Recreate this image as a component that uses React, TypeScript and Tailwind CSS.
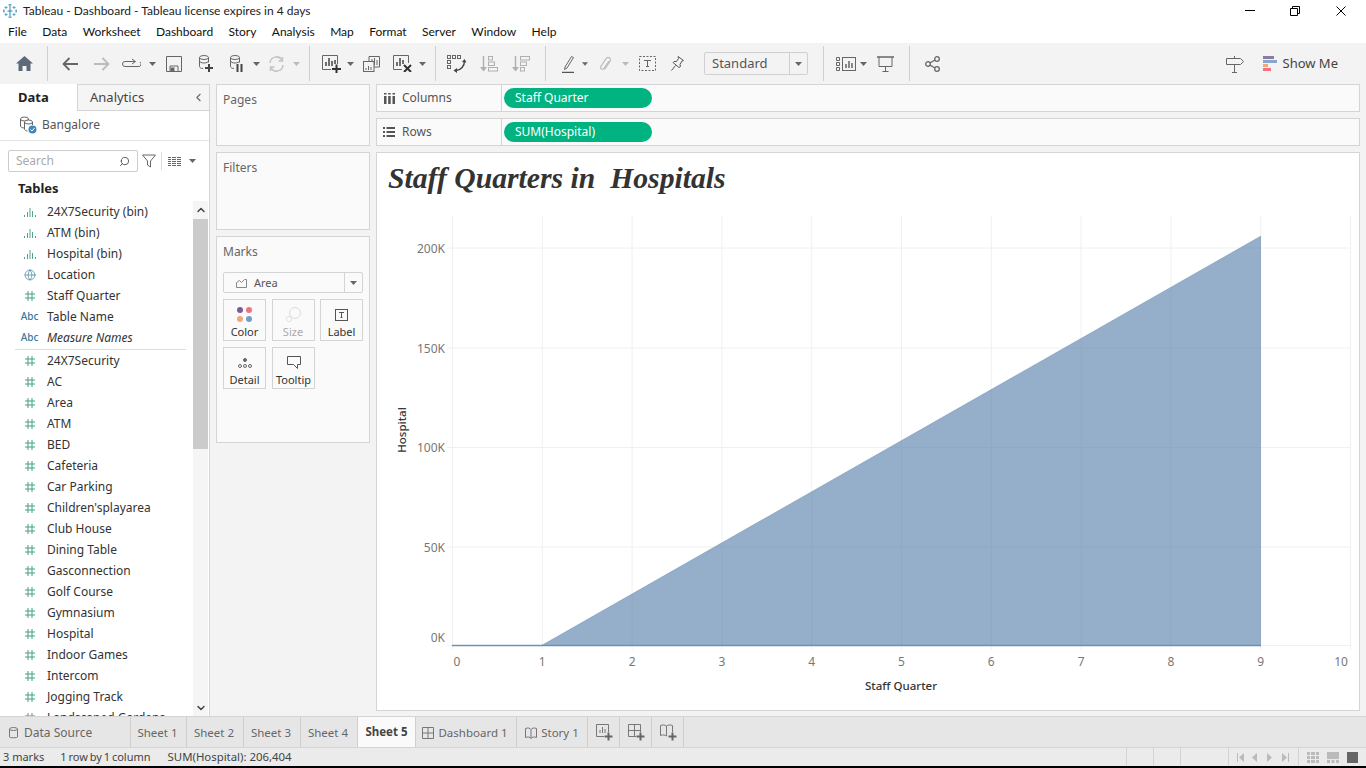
import { ChevronLeft, ChevronUp, ChevronDown, Globe, Search } from 'lucide-react';

const font = { fontFamily: '"Noto Sans", "Open Sans", sans-serif' };
const systemFont = { fontFamily: 'Lato, "Noto Sans", sans-serif' };

const menuItems = ['File', 'Data', 'Worksheet', 'Dashboard', 'Story', 'Analysis', 'Map', 'Format', 'Server', 'Window', 'Help'];

const binFields = ['24X7Security (bin)', 'ATM (bin)', 'Hospital (bin)'];
const measures = [
  '24X7Security', 'AC', 'Area', 'ATM', 'BED', 'Cafeteria', 'Car Parking', "Children'splayarea", 'Club House',
  'Dining Table', 'Gasconnection', 'Golf Course', 'Gymnasium', 'Hospital', 'Indoor Games', 'Intercom',
  'Jogging Track', 'Landscaped Gardens',
];

const Caret = ({ color = '#666' }: { color?: string }) => (
  <svg width="7" height="4" viewBox="0 0 7 4"><path d="M0 0h7L3.5 4z" fill={color} /></svg>
);

const Sep = () => <span className="h-[35px] w-px bg-[#d0d0d0] shrink-0" />;

const BinIcon = () => (
  <svg width="14" height="10" viewBox="0 0 14 10" fill="#4fa587">
    <rect x="1" y="8" width="1" height="2" /><rect x="4" y="5" width="1" height="5" /><rect x="6.5" y="1" width="1" height="9" />
    <rect x="9" y="4" width="1" height="6" /><rect x="12" y="8" width="1" height="2" />
  </svg>
);

const HashIcon = () => (
  <svg width="10" height="10" viewBox="0 0 10 10" stroke="#3fa382" fill="none">
    <path d="M3 0v10M7 0v10M0 3h10M0 7h10" />
  </svg>
);

const FieldIcon = ({ type }: { type: string }) => {
  if (type === 'bin') return <BinIcon />;
  if (type === 'geo') return <Globe size={12} color="#4a8ca8" strokeWidth={1.5} />;
  if (type === 'abc') return <span className="text-[10px] font-medium text-[#3d7a9c]">Abc</span>;
  return <HashIcon />;
};

const FieldRow = ({ type, name, italic }: { type: string; name: string; italic?: boolean }) => (
  <div className="h-[21px] flex items-center shrink-0">
    <span className="w-[47px] pl-[15px] pr-[3px] flex justify-center shrink-0"><FieldIcon type={type} /></span>
    <span className={`text-xs text-[#333] whitespace-nowrap ${italic ? 'italic' : ''}`}>{name}</span>
  </div>
);

const DataPane = () => (
  <div className="w-[210px] shrink-0 bg-white border-r border-[#d4d4d4] flex flex-col overflow-hidden">
    <div className="h-[27px] flex shrink-0">
      <div className="w-[77px] pl-[18px] flex items-center text-[13px] font-bold text-[#222]">Data</div>
      <div className="flex-1 bg-[#f5f5f5] border-l border-b border-t border-[#d4d4d4] pl-[12px] pr-[4px] flex items-center justify-between text-[13px] text-[#444]">
        Analytics
        <ChevronLeft size={13} color="#666" />
      </div>
    </div>
    <div className="h-[30px] border-b border-[#e4e4e4] flex items-center shrink-0 pl-[19px] gap-[5px] pb-[2px]">
      <svg width="18" height="18" viewBox="0 0 18 18" fill="none" stroke="#666" strokeWidth="1">
        <ellipse cx="5.5" cy="3" rx="4" ry="2" />
        <path d="M1.500 3v7c0 1 1.500 2 4 2M9.500 3v1" />
        <ellipse cx="9.500" cy="6" rx="4" ry="2" fill="#fff" />
        <path d="M5.500 6v7c0 1 1.500 2 3 2M13.500 6v3" />
        <circle cx="13.500" cy="13.500" r="4" fill="#3f88b5" stroke="none" />
        <path d="M11.500 13.500l1.500 1.500 2.500-3" stroke="#fff" />
      </svg>
      <span className="text-xs text-[#555]">Bangalore</span>
    </div>
    <div className="h-[38px] flex items-center shrink-0 pl-[8px] pt-[2px]">
      <div className="w-[130px] h-[22px] border border-[#ccc] rounded-[2px] flex items-center justify-between pl-[7px] pr-[7px]">
        <span className="text-xs text-[#aaa]">Search</span>
        <Search size={11} color="#555" className="-scale-x-100" />
      </div>
      <svg className="ml-[4px]" width="14" height="14" viewBox="0 0 14 14" fill="none" stroke="#666">
        <path d="M.5 1h13L8.5 7v6l-3-2V7z" />
      </svg>
      <span className="ml-[5px] w-px h-[18px] bg-[#ddd]" />
      <svg className="ml-[6px]" width="13" height="9" viewBox="0 0 13 9" fill="#666">
        <path d="M0 0h13v1H0zM0 2h13v1H0zM0 4h13v1H0zM0 6h13v1H0zM0 8h13v1H0z" />
        <path d="M3 0h1v9H3zM8 0h1v9H8z" fill="#fff" />
      </svg>
      <span className="ml-[8px] flex"><Caret /></span>
    </div>
    <div className="pl-[18px] h-[20px] text-[13px] font-bold text-[#222] flex items-center shrink-0">Tables</div>
    <div className="flex flex-1 min-h-0 mt-[2px]">
      <div className="flex-1 min-w-0 flex flex-col overflow-hidden">
        {binFields.map((f) => <FieldRow key={f} type="bin" name={f} />)}
        <FieldRow type="geo" name="Location" />
        <FieldRow type="hash" name="Staff Quarter" />
        <FieldRow type="abc" name="Table Name" />
        <FieldRow type="abc" name="Measure Names" italic />
        <div className="h-px bg-[#ddd] ml-[15px] mr-[7px] mt-[1px] shrink-0" />
        {measures.map((f) => <FieldRow key={f} type="hash" name={f} />)}
      </div>
      <div className="w-[15px] mr-px shrink-0 bg-[#f5f5f5] flex flex-col">
        <div className="h-[18px] flex items-center justify-center"><ChevronUp size={12} color="#444" strokeWidth={3} /></div>
        <div className="h-[230px] bg-[#cbcbcb]" />
        <div className="flex-1" />
        <div className="h-[16px] flex items-center justify-center"><ChevronDown size={12} color="#444" strokeWidth={3} /></div>
      </div>
    </div>
  </div>
);

const MarkButton = ({ label, children, disabled }: { label: string; children: React.ReactNode; disabled?: boolean }) => (
  <div className="w-[43px] h-[42px] border border-[#d4d4d4] flex flex-col items-center pt-[5px]">
    <div className="h-[19px] flex items-center justify-center">{children}</div>
    <span className={`text-[11px] leading-[15px] ${disabled ? 'text-[#aaa]' : 'text-[#333]'}`}>{label}</span>
  </div>
);

const SideCard = ({ title, className, children }: { title: string; className: string; children?: React.ReactNode }) => (
  <div className={`bg-[#fafafa] border border-[#d4d4d4] px-[6px] ${className}`}>
    <div className="text-xs text-[#666] h-[16px] mt-[7px] flex items-center">{title}</div>
    {children}
  </div>
);

const MarksCard = () => (
  <SideCard title="Marks" className="h-[207px] shrink-0">
    <div className="mt-[12px] h-[21px] border border-[#d4d4d4] rounded-[2px] flex items-center">
      <div className="flex-1 flex items-center pl-[12px] gap-[7px] pt-[1px]">
        <svg width="11" height="10" viewBox="0 0 11 10" fill="none" stroke="#888"><path d="M.5 9.5v-5l3-2 2 2 3-3h2v8z" /></svg>
        <span className="text-[11px] text-[#555]">Area</span>
      </div>
      <div className="w-[18px] h-full border-l border-[#d4d4d4] flex items-center justify-center"><Caret /></div>
    </div>
    <div className="mt-[6px] flex justify-between">
      <MarkButton label="Color">
        <svg width="15" height="15" viewBox="0 0 15 15">
          <circle cx="3" cy="3" r="3" fill="#7b5c93" /><circle cx="12" cy="3" r="3" fill="#f2727e" />
          <circle cx="3" cy="12" r="3" fill="#f3a676" /><circle cx="12" cy="12" r="3" fill="#6f9ecb" />
        </svg>
      </MarkButton>
      <MarkButton label="Size" disabled>
        <svg width="15" height="15" viewBox="0 0 15 15" fill="none" stroke="#ddd">
          <circle cx="9" cy="6" r="5.5" /><circle cx="3" cy="12" r="2.5" fill="#fff" />
        </svg>
      </MarkButton>
      <MarkButton label="Label">
        <svg width="13" height="12" viewBox="0 0 13 12" fill="none" stroke="#555">
          <rect x=".5" y=".5" width="12" height="11" /><path d="M4 3.5h5M6.5 3.5v5M5.5 8.5h2" />
        </svg>
      </MarkButton>
    </div>
    <div className="mt-[6px] flex gap-[6px]">
      <MarkButton label="Detail">
        <svg width="14" height="10" viewBox="0 0 14 10" fill="none" stroke="#666">
          <circle cx="7" cy="2" r="1.5" fill="#666" /><circle cx="2" cy="8" r="1.5" /><circle cx="7" cy="8" r="1.5" /><circle cx="12" cy="8" r="1.5" />
        </svg>
      </MarkButton>
      <MarkButton label="Tooltip">
        <svg width="14" height="13" viewBox="0 0 14 13" fill="none" stroke="#555">
          <path d="M.5.5h13v8h-3v4l-4-4h-6z" />
        </svg>
      </MarkButton>
    </div>
  </SideCard>
);

const Shelf = ({ icon, label, pill }: { icon: React.ReactNode; label: string; pill: string }) => (
  <div className="h-[28px] bg-[#fafafa] border border-[#d4d4d4] flex items-center shrink-0">
    <div className="w-[125px] h-full border-r border-[#d4d4d4] flex items-center pl-[6px] gap-[7px] shrink-0">
      <span className="w-[12px] flex justify-center">{icon}</span>
      <span className="text-xs text-[#555]">{label}</span>
    </div>
    <div className="ml-[2px] w-[148px] h-[20px] rounded-full bg-[#00b381] pl-[11px] flex items-center text-xs text-white">{pill}</div>
  </div>
);

const chartFont = '"Noto Sans", "Open Sans", sans-serif';
const xTicks = [0, 1, 2, 3, 4, 5, 6, 7, 8, 9, 10];
const yGrid = [248, 348, 447.5, 547];
const yLabels = [
  { y: 248, label: '200K' },
  { y: 348, label: '150K' },
  { y: 447.5, label: '100K' },
  { y: 547, label: '50K' },
  { y: 637, label: '0K' },
];

const Chart = () => (
  <svg className="block" width="982" height="503" viewBox="377 207 982 503">
    {xTicks.map((t) => {
      const x = 452.5 + t * 89.8;
      return <line key={t} x1={x} x2={x} y1="216" y2="650" stroke="#f0f0f0" />;
    })}
    {yGrid.map((y) => <line key={y} x1="447" x2="1351" y1={y} y2={y} stroke="#f0f0f0" />)}
    <line x1="447" x2="1351" y1="645.5" y2="645.5" stroke="#f0f0f0" />
    <path d="M541.5 645.5L1261 236V646H541.5z" fill="#4e79a7" fillOpacity="0.6" />
    <path d="M541.5 645.5L1261 236" fill="none" stroke="#4e79a7" strokeOpacity="0.35" />
    <line x1="452" x2="1261" y1="645.5" y2="645.5" stroke="#6f8fb3" strokeWidth="1.5" />
    {yLabels.map((t) => (
      <text key={t.label} x="445" y={t.y + 4.5} textAnchor="end" fontSize="12" fill="#777" fontFamily={chartFont}>{t.label}</text>
    ))}
    {xTicks.map((t) => (
      <text key={t} x={t === 0 ? 457 : t === 10 ? 1341 : 452.5 + t * 89.8} y="666" textAnchor="middle" fontSize="12" fill="#777" fontFamily={chartFont}>{t}</text>
    ))}
    <text x="901" y="690" textAnchor="middle" fontSize="11.5" fontWeight="500" fill="#333" fontFamily={chartFont}>Staff Quarter</text>
    <text x="0" y="0" transform="translate(406 430) rotate(-90)" textAnchor="middle" fontSize="11.5" fontWeight="500" fill="#333" fontFamily={chartFont}>Hospital</text>
  </svg>
);

const Toolbar = () => (
  <div className="h-[41px] bg-[#f3f3f3] flex items-center shrink-0">
    <span className="w-[47px] flex justify-center pl-px">
      <svg width="17" height="15" viewBox="0 0 17 15" fill="#5c6a78"><path d="M8.5 0L17 7.5h-2.5V15h-4v-5h-4v5h-4V7.5H0z" /></svg>
    </span>
    <Sep />
    <span className="ml-[6px] w-[32px] flex justify-center">
      <svg width="16" height="14" viewBox="0 0 16 14" fill="none" stroke="#666" strokeWidth="1.8"><path d="M16 7H2M7.5 1L1.5 7l6 6" /></svg>
    </span>
    <span className="w-[32px] flex justify-center">
      <svg width="16" height="14" viewBox="0 0 16 14" fill="none" stroke="#bbb" strokeWidth="1.8"><path d="M0 7h14M8.5 1l6 6-6 6" /></svg>
    </span>
    <span className="w-[26px] flex justify-center">
      <svg width="19" height="12" viewBox="0 0 19 12" fill="none" stroke="#666"><path d="M13 3.5H3a2.5 2.5 0 000 5h13a2.5 2.5 0 002-4.5" /><path d="M10 1l3.5 2.5L10 6" /></svg>
    </span>
    <span className="w-[16px] flex justify-center"><Caret /></span>
    <span className="w-[28px] flex justify-center">
      <svg width="16" height="16" viewBox="0 0 16 16" fill="none" stroke="#666"><path d="M.5.5h15v15H.5z" /><path d="M4 15v-5h8v5" /><rect x="5" y="12" width="3" height="3" fill="#666" /></svg>
    </span>
    <span className="w-[34px] flex justify-center">
      <svg width="15" height="17" viewBox="0 0 15 17" fill="none" stroke="#666"><ellipse cx="6" cy="2.5" rx="4.5" ry="2" /><path d="M1.500 2.500v9c0 1 1.500 2 3.500 2M10.500 2.500v5M1.500 6c0 1 2 2 4.500 2s4.500-1 4.500-2" /><path d="M7 13h8M11 9v8" stroke="#444" strokeWidth="2" /></svg>
    </span>
    <span className="w-[28px] flex justify-center">
      <svg width="14" height="17" viewBox="0 0 14 17" fill="none" stroke="#666"><ellipse cx="6" cy="2.5" rx="4.5" ry="2" /><path d="M1.500 2.500v9c0 1 1.500 2 3.500 2M10.500 2.500v5M1.500 6c0 1 2 2 4.500 2s4.500-1 4.500-2" /><path d="M8.500 9v8M12.500 9v8" stroke="#444" strokeWidth="2" /></svg>
    </span>
    <span className="w-[12px] flex justify-center"><Caret /></span>
    <span className="w-[28px] flex justify-center">
      <svg width="17" height="16" viewBox="0 0 17 16" fill="none" stroke="#c4c4c4" strokeWidth="1.5"><path d="M2 7a6.500 6.500 0 0112-3M15 9a6.500 6.500 0 01-12 3" /><path d="M14.500 1v4h-4M2.500 15v-4h4" /></svg>
    </span>
    <span className="w-[12px] flex justify-center"><Caret color="#bbb" /></span>
    <span className="ml-[7px] flex"><Sep /></span>
    <span className="ml-[7px] w-[28px] flex justify-center">
      <svg width="19" height="18" viewBox="0 0 19 18" fill="none" stroke="#666"><path d="M15.500 9V.5H.5v14H9" /><path d="M4 11V7M7 11V3M10 11V6M13 9V5" stroke="#444" strokeWidth="1.500" /><path d="M10 14h9M14.500 9.500v8.500" stroke="#333" strokeWidth="2" /></svg>
    </span>
    <span className="w-[10px] flex justify-center"><Caret /></span>
    <span className="w-[32px] flex justify-center">
      <svg width="17" height="16" viewBox="0 0 17 16" fill="none" stroke="#666"><path d="M6 5V.5h10.500V11H11" /><rect x=".5" y="5.500" width="10.500" height="10" /><path d="M9 5V3M11.500 9V2M14 9V4M3 14v-2M5.500 14v-4M8 14v-3" strokeWidth="1" /></svg>
    </span>
    <span className="w-[30px] flex justify-center">
      <svg width="19" height="17" viewBox="0 0 19 17" fill="none" stroke="#666"><path d="M15.500 8V.5H.5v14H9" /><path d="M4 11V7M7 11V3M10 9V5" stroke="#444" strokeWidth="1.500" /><path d="M11 10l7 7M18 10l-7 7" stroke="#333" strokeWidth="2" /></svg>
    </span>
    <span className="w-[10px] flex justify-center"><Caret /></span>
    <span className="ml-[8px] flex"><Sep /></span>
    <span className="ml-[7px] w-[28px] flex justify-center">
      <svg width="20" height="18" viewBox="0 0 20 18" fill="none" stroke="#666">
        <rect x=".5" y=".5" width="3" height="3" /><rect x="5.500" y=".5" width="3" height="3" /><rect x="10.500" y=".5" width="3" height="3" />
        <rect x=".5" y="5.500" width="3" height="3" /><rect x=".5" y="10.500" width="3" height="3" />
        <path d="M17.500 6c0 5-3.500 9-8.500 9.500" strokeWidth="1.400" stroke="#444" />
        <path d="M15 7l2.500-3 2 3.500zM10 13v5l-3.500-2.500z" fill="#444" stroke="none" />
      </svg>
    </span>
    <span className="w-[36px] flex justify-center">
      <svg width="18" height="16" viewBox="0 0 18 16" fill="none" stroke="#b0b0b0"><path d="M3.500 0v12" strokeWidth="1.500" /><path d="M0 11h7l-3.500 4.500z" fill="#b0b0b0" stroke="none" /><rect x="8.500" y=".5" width="4" height="3.500" /><rect x="8.500" y="6" width="6" height="3.500" /><rect x="8.500" y="11.500" width="9" height="3.500" /></svg>
    </span>
    <span className="w-[28px] flex justify-center">
      <svg width="18" height="16" viewBox="0 0 18 16" fill="none" stroke="#b0b0b0"><path d="M3.500 0v12" strokeWidth="1.500" /><path d="M0 11h7l-3.500 4.500z" fill="#b0b0b0" stroke="none" /><rect x="8.500" y=".5" width="9" height="3.500" /><rect x="8.500" y="6" width="6" height="3.500" /><rect x="8.500" y="11.500" width="4" height="3.500" /></svg>
    </span>
    <span className="ml-[10px] flex"><Sep /></span>
    <span className="ml-[8px] w-[28px] flex justify-center">
      <svg width="13" height="18" viewBox="0 0 13 18" fill="none" stroke="#666"><path d="M3 12L9.500 1.500l2 1L5 13l-2.500 1.500z" /><path d="M0 17.500h12" strokeWidth="1.500" stroke="#555" /></svg>
    </span>
    <span className="w-[6px] flex justify-center"><Caret /></span>
    <span className="ml-[3px] w-[28px] flex justify-center">
      <svg width="12" height="16" viewBox="0 0 12 16" fill="none" stroke="#c0c0c0" strokeWidth="1.300"><path d="M10 5L4.500 13a2 2 0 01-3-2L7.500 2a2.500 2.500 0 014 2.500L5.500 13.500" /></svg>
    </span>
    <span className="w-[12px] flex justify-center"><Caret color="#bbb" /></span>
    <span className="w-[32px] flex justify-center">
      <svg width="17" height="15" viewBox="0 0 17 15" fill="none" stroke="#666"><rect x=".5" y=".5" width="16" height="14" strokeDasharray="2 1.500" /><path d="M5 4.500h7M8.500 4.500v6M7 10.500h3" /></svg>
    </span>
    <span className="w-[28px] flex justify-center">
      <svg width="13" height="15" viewBox="0 0 13 15" fill="none" stroke="#555"><path d="M7 .5l5.500 4-1.500.5-2 3.500.5 2L8 11.500 2 6.500l1-1h2.500L7.500 2.500z" /><path d="M4.500 9.500L.5 14.500" /></svg>
    </span>
    <div className="ml-[13px] w-[104px] h-[23px] border border-[#d0d0d0] rounded-[2px] flex items-center shrink-0">
      <span className="flex-1 pl-[7px] text-[13px] text-[#555]">Standard</span>
      <span className="w-[18px] h-full border-l border-[#d0d0d0] flex items-center justify-center"><Caret /></span>
    </div>
    <span className="ml-[15px] flex"><Sep /></span>
    <span className="ml-[12px] w-[20px] flex justify-center">
      <svg width="20" height="14" viewBox="0 0 20 14" fill="none" stroke="#666"><path d="M.5.5h3v3h-3zM.5 5.500h3v3h-3zM.5 10.500h3v3h-3z" /><rect x="6.500" y=".5" width="13" height="13" /><path d="M10 11V7M13 11V4M16 11V6" strokeWidth="1.500" /></svg>
    </span>
    <span className="ml-[3px] w-[8px] flex justify-center"><Caret /></span>
    <span className="w-[36px] flex justify-center">
      <svg width="17" height="16" viewBox="0 0 17 16" fill="none" stroke="#666"><path d="M0 1h17" strokeWidth="1.500" /><path d="M2 1v9.500h13V1M8.500 10.500V15M5.500 15.500h6" /></svg>
    </span>
    <span className="ml-[6px] flex"><Sep /></span>
    <span className="w-[44px] flex justify-center">
      <svg width="15" height="16" viewBox="0 0 15 16" fill="none" stroke="#666" strokeWidth="1.300"><circle cx="3" cy="8" r="2.300" /><circle cx="12" cy="3" r="2.300" /><circle cx="12" cy="13" r="2.300" /><path d="M5 7l5-3M5 9l5 3" /></svg>
    </span>
    <div className="ml-auto flex items-center pr-[28px]">
      <svg width="18" height="18" viewBox="0 0 18 18" fill="none" stroke="#666"><path d="M.5 3.500h14l3 3-3 3H.5zM8.500 1v2.500M8.500 9.500v8M6 17.500h5" /></svg>
      <svg className="ml-[19px]" width="14" height="16" viewBox="0 0 14 16">
        <rect width="11" height="3" fill="#8b7aa3" /><rect y="4" width="14" height="3" fill="#86a6cd" /><rect y="8" width="5" height="3" fill="#f3a676" /><rect y="12" width="8" height="3" fill="#f2727e" />
      </svg>
      <span className="ml-[6px] text-[13px] text-[#444]">Show Me</span>
    </div>
  </div>
);

const SheetTab = ({ label, className = '', active, icon }: { label?: string; className?: string; active?: boolean; icon?: React.ReactNode }) => (
  <div className={`h-full border-r border-[#cfcfcf] flex items-center gap-[4px] shrink-0 text-[11.5px] ${active ? 'bg-[#fafafa] font-bold text-[#444]' : 'text-[#666] pt-px'} ${className}`}>
    {icon}
    {label && <span className="whitespace-nowrap">{label}</span>}
  </div>
);

const addIconStroke = '#777';

const App = () => (
  <div className="h-screen w-full bg-[#f3f3f3] flex flex-col overflow-hidden" style={font}>
    {/* title bar */}
    <div className="h-[21px] bg-white flex items-center shrink-0 relative" style={systemFont}>
      <svg className="ml-[3px]" width="14" height="14" viewBox="0 0 14 14" stroke="#2f86b0" strokeWidth="1" fill="none">
        <path d="M7 2v10M4.500 7h5M7 0v1M7 13v1M0 7h1M13 7h1M5.500 1h3M5.500 13h3M1 5.500v3M13 5.500v3" />
        <path d="M3 2v3M1.500 3.500h3M11 2v3M9.500 3.500h3M3 9v3M1.500 10.500h3M11 9v3M9.500 10.500h3" stroke="#5aa5c8" />
      </svg>
      <span className="ml-[6px] text-xs text-[#222]">Tableau - Dashboard - Tableau license expires in 4 days</span>
      <div className="ml-auto flex items-center h-full">
        <svg className="mr-[35px]" width="10" height="1" viewBox="0 0 10 1"><path d="M0 .5h10" stroke="#000" /></svg>
        <svg className="mr-[36px]" width="10" height="10" viewBox="0 0 10 10" fill="none" stroke="#000"><path d="M.5 2.500h7v7h-7zM2.500 2.500v-2h7v7h-2" /></svg>
        <svg className="mr-[20px]" width="10" height="10" viewBox="0 0 10 10" fill="none" stroke="#000"><path d="M.5.5l9 9M9.500.5l-9 9" /></svg>
      </div>
    </div>
    {/* menu */}
    <div className="h-[22px] bg-white flex items-center pl-[8px] gap-[15.4px] text-xs text-[#111] shrink-0" style={systemFont}>
      {menuItems.map((m) => <span key={m}>{m}</span>)}
    </div>
    <Toolbar />
    {/* body */}
    <div className="flex-1 min-h-0 flex border-b border-[#d4d4d4]">
      <DataPane />
      <div className="ml-[6px] w-[154px] shrink-0 flex flex-col gap-[6px]">
        <SideCard title="Pages" className="h-[62px] shrink-0" />
        <SideCard title="Filters" className="h-[78px] shrink-0" />
        <MarksCard />
      </div>
      <div className="ml-[6px] w-[984px] shrink-0 flex flex-col gap-[6px] pb-[5px]">
        <Shelf
          label="Columns"
          pill="Staff Quarter"
          icon={<svg width="11" height="11" viewBox="0 0 11 11" fill="#555"><path d="M0 3h2.500v8H0zM4.200 3h2.500v8H4.200zM8.500 3H11v8H8.500zM0 0h2.500v1.500H0zM4.200 0h2.500v1.500H4.200zM8.500 0H11v1.500H8.500z" /></svg>}
        />
        <Shelf
          label="Rows"
          pill="SUM(Hospital)"
          icon={<svg width="12" height="10" viewBox="0 0 12 10" fill="#555"><path d="M0 0h2v2H0zM3.500 0H12v2H3.500zM0 4h2v2H0zM3.500 4H12v2H3.500zM0 8h2v2H0zM3.500 8H12v2H3.500z" /></svg>}
        />
        <div className="flex-1 min-h-0 bg-white border border-[#d4d4d4] overflow-hidden">
          <div
            className="h-[54px] pl-[11px] pb-[4px] flex items-center text-[29.7px] font-bold italic text-[#333] whitespace-pre"
            style={{ fontFamily: '"Liberation Serif", serif' }}
          >
            Staff Quarters in  Hospitals
          </div>
          <Chart />
        </div>
      </div>
    </div>
    {/* sheet tabs */}
    <div className="h-[30px] bg-[#e6e6e6] flex items-center shrink-0">
      <SheetTab
        label="Data Source"
        className="w-[131px] pl-[9px] [&>span]:text-xs"
        icon={<svg className="mr-[2px]" width="9" height="12" viewBox="0 0 9 12" fill="none" stroke="#777"><ellipse cx="4.500" cy="2" rx="4" ry="1.500" /><path d="M.5 2v8c0 1 8 1 8 0V2" /></svg>}
      />
      <SheetTab label="Sheet 1" className="w-[56px] justify-center pr-[2px]" />
      <SheetTab label="Sheet 2" className="w-[57px] justify-center pr-[2px]" />
      <SheetTab label="Sheet 3" className="w-[57px] justify-center pr-[2px]" />
      <SheetTab label="Sheet 4" className="w-[57px] justify-center pr-[2px]" />
      <SheetTab label="Sheet 5" className="w-[58px] justify-center" active />
      <SheetTab
        label="Dashboard 1"
        className="w-[101px] justify-center pr-[2px]"
        icon={<svg width="12" height="12" viewBox="0 0 12 12" fill="none" stroke="#777"><path d="M.5.5h11v11H.5zM.5 6h11M6 .5v11" /></svg>}
      />
      <SheetTab
        label="Story 1"
        className="w-[71px] justify-center"
        icon={<svg width="12" height="12" viewBox="0 0 12 12" fill="none" stroke="#777"><path d="M.5 1.500C3 .5 5 1 6 2.500 7 1 9 .5 11.500 1.500v9C9 9.500 7 10 6 11.500 5 10 3 9.500.5 10.500zM6 2.500v9" /></svg>}
      />
      <SheetTab
        className="w-[32px] justify-center pl-px"
        icon={<svg width="17" height="17" viewBox="0 0 17 17" fill="none" stroke={addIconStroke}><path d="M12.500 8V.5H.5v12H8M4 9V6M6.500 9V3M9 9V5" /><path d="M8.500 12.500h8M12.500 8.500v8" strokeWidth="2" stroke="#666" /></svg>}
      />
      <SheetTab
        className="w-[32px] justify-center pl-px"
        icon={<svg width="17" height="17" viewBox="0 0 17 17" fill="none" stroke={addIconStroke}><path d="M12.500 8V.5H.5v12H8M.5 6.500h12M6.500.5v12" /><path d="M8.500 12.500h8M12.500 8.500v8" strokeWidth="2" stroke="#666" /></svg>}
      />
      <SheetTab
        className="w-[32px] justify-center pl-px"
        icon={<svg width="17" height="17" viewBox="0 0 17 17" fill="none" stroke={addIconStroke}><path d="M12.500 8V1.500C10 .5 8 1 6.500 2 5 1 3 .5.500 1.500v10c2.500-1 4.500-.5 6 .5M6.500 2v10" /><path d="M8.500 12.500h8M12.500 8.500v8" strokeWidth="2" stroke="#666" /></svg>}
      />
    </div>
    {/* status bar */}
    <div className="h-[19px] bg-[#ebebeb] border-t border-[#d4d4d4] flex items-center text-[11px] text-[#444] shrink-0">
      <span className="ml-[3px]">3 marks</span>
      <span className="ml-[16px] [word-spacing:-1px]">1 row by 1 column</span>
      <span className="ml-[17px] text-[11.4px]">SUM(Hospital): 206,404</span>
      <div className="ml-auto flex items-center h-full">
        <span className="w-px h-full bg-[#d4d4d4]" />
        <div className="w-[26px]" />
        <span className="w-px h-full bg-[#d4d4d4]" />
        <div className="w-[26px]" />
        <span className="w-px h-full bg-[#d4d4d4]" />
        <div className="w-[47px]" />
        <span className="w-px h-full bg-[#d4d4d4]" />
        <div className="w-[69px] flex items-center justify-center">
          <svg width="54" height="9" viewBox="0 0 54 9" fill="#bbb">
            <path d="M0 0h1v9H0zM7 0v9L2 4.500zM20 0v9l-5-4.500zM30 0l5 4.500L30 9zM45 0l5 4.500L45 9zM51 0h1v9h-1z" />
          </svg>
        </div>
        <span className="w-px h-full bg-[#d4d4d4]" />
        <div className="w-[67px] flex items-center pl-[8px] gap-[8px]">
          <svg width="12" height="11" viewBox="0 0 12 11" fill="#bbb"><path d="M0 0h3v3H0zM4 0h4v3H4zM9 0h3v3H9zM0 4h3v3H0zM4 4h4v3H4zM9 4h3v3H9zM0 8h3v3H0zM4 8h4v3H4zM9 8h3v3H9z" /></svg>
          <svg width="12" height="11" viewBox="0 0 12 11" fill="#bbb"><path d="M0 0h12v7H0zM0 8h3v3H0zM4.500 8h3v3h-3zM9 8h3v3H9z" /></svg>
          <span className="w-[11px] h-[11px] bg-[#666]" />
        </div>
      </div>
    </div>
    <div className="h-[2px] bg-black shrink-0" />
  </div>
);

export default App;
